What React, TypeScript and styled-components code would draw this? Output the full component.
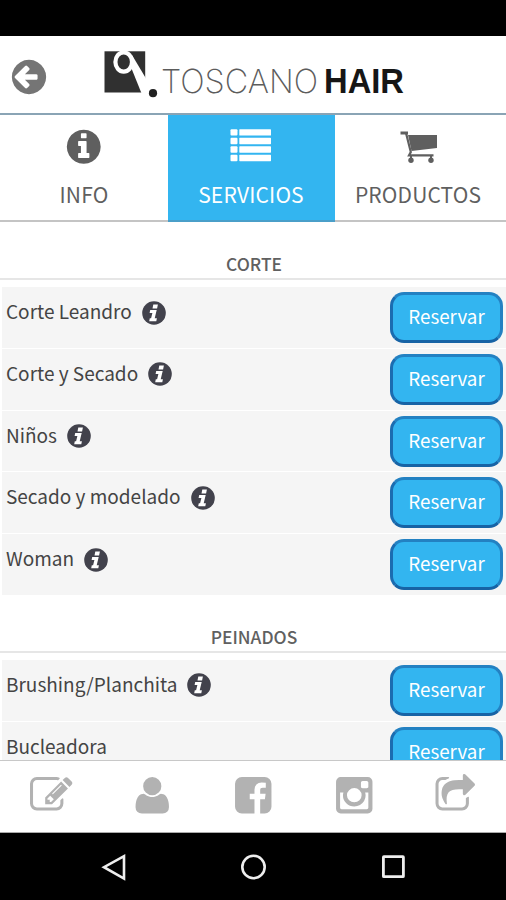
import React from "react";
import styled, { createGlobalStyle } from "styled-components";

const GlobalStyle = createGlobalStyle`
  * { box-sizing: border-box; }
  body { margin: 0; background: #fff; }
  svg { display: block; flex: none; }
`;

const Screen = styled.div`
  width: 506px;
  height: 900px;
  display: flex;
  flex-direction: column;
  overflow: hidden;
  background: #fff;
  font-family: "Noto Sans CJK SC", "Noto Sans", sans-serif;
`;

const StatusBar = styled.div`
  flex: none;
  height: 36px;
  background: #000;
`;

const Header = styled.header`
  flex: none;
  height: 79px;
  display: flex;
  align-items: flex-start;
  border-bottom: 2px solid #8aa4b5;
`;

const BackButton = styled.button`
  border: 0;
  padding: 0;
  margin: 21px 0 0 9px;
  background: none;
  color: #757575;
`;

const Logo = styled.svg`
  margin: 10px 0 0 51px;
`;

const Tabs = styled.nav`
  flex: none;
  height: 107px;
  display: grid;
  grid-template-columns: 168px 167px 171px;
`;

const Tab = styled.button<{ $active?: boolean; $inset?: number }>`
  border: 0;
  border-bottom: 2px solid ${(p) => (p.$active ? "#4a9fc9" : "#c4c4c4")};
  margin: 0;
  padding: 12px ${(p) => p.$inset ?? 0}px 0 0;
  display: flex;
  flex-direction: column;
  align-items: center;
  gap: 15px;
  font: 400 21px/24px "Noto Sans CJK SC", sans-serif;
  letter-spacing: 0.15px;
  color: ${(p) => (p.$active ? "#fff" : "#5f5f5f")};
  background: ${(p) => (p.$active ? "#33b5f0" : "#fff")};
`;

const TabIcon = styled.span`
  height: 40px;
  display: flex;
  align-items: center;
`;

const Content = styled.main`
  flex: 1;
  min-height: 0;
  overflow: hidden;
`;

const SectionTitle = styled.h2`
  margin: 0;
  padding: 30px 0 0 2px;
  height: 58px;
  border-bottom: 2px solid #e6e6e6;
  text-align: center;
  font-size: 17.4px;
  line-height: 24px;
  font-weight: 500;
  color: #606060;
`;

const List = styled.ul`
  list-style: none;
  margin: 7px 0 0 2px;
  padding: 0;
  display: flex;
  flex-direction: column;
  gap: 1px;
`;

const Row = styled.li`
  height: 60.8px;
  padding: 5px 3px 0 4px;
  display: flex;
  align-items: flex-start;
  justify-content: space-between;
  background: #f5f5f5;
`;

const Service = styled.div`
  display: flex;
  align-items: flex-start;
  gap: 10px;
  padding-top: 6px;
  font-size: 19px;
  line-height: 26px;
  color: #444;
`;

const Badge = styled.svg`
  margin-top: 2.5px;
`;

const ReserveButton = styled.button`
  width: 113px;
  height: 51px;
  padding: 0 0 3px;
  border: 3px solid;
  border-color: #2381c2 #2381c2 #1763a5 #1b6cb0;
  border-radius: 14px;
  background: #33b5f0;
  color: #fff;
  font: 400 18.8px/24px "Noto Sans CJK SC", sans-serif;
`;

const Footer = styled.footer`
  flex: none;
  height: 73px;
  padding: 13px 0 0 1px;
  display: flex;
  justify-content: space-around;
  align-items: flex-start;
  border-top: 1px solid #c8c8c8;
  border-bottom: 1px solid #aaa;
  color: #b2b2b2;
  background: #fff;
`;

const FooterItem = styled.a`
  flex: 1;
  display: flex;
  justify-content: center;
`;

const SystemBar = styled.div`
  flex: none;
  height: 67px;
  display: flex;
  justify-content: center;
  align-items: center;
  gap: 113px;
  background: #000;
`;

const DISC =
  "q0 209-103 385.5t-279.5 279.5-385.5 103-385.5-103-279.5-279.5-103-385.5 103-385.5 279.5-279.5 385.5-103 385.5 103 279.5 279.5 103 385.5z";

const paths = {
  back:
    "M1280 960v-128q0-26-19-45t-45-19h-502l189-189q19-19 19-45t-19-45l-91-91q-18-18-45-18t-45 18l-362 362-91 91q-18 18-18 45t18 45l91 91 362 362q18 18 45 18t45-18l91-91q18-18 18-45t-18-45l-189-189h502q26 0 45-19t19-45zm384-64" +
    DISC,
  info:
    "M1152 1376v-160q0-14-9-23t-23-9h-96v-512q0-14-9-23t-23-9h-320q-14 0-23 9t-9 23v160q0 14 9 23t23 9h96v320h-96q-14 0-23 9t-9 23v160q0 14 9 23t23 9h448q14 0 23-9t9-23zm-128-896v-160q0-14-9-23t-23-9h-192q-14 0-23 9t-9 23v160q0 14 9 23t23 9h192q14 0 23-9t9-23zm640 416" +
    DISC,
  edit:
    "M888 1184l116-116-152-152-116 116v56h96v96h56zm440-720q-16-16-33 1l-350 350q-17 17-1 33t33-1l350-350q17-17 1-33zm80 594v190q0 119-84.5 203.5t-203.5 84.5h-832q-119 0-203.5-84.5t-84.5-203.5v-832q0-119 84.5-203.5t203.5-84.5h832q63 0 117 25 15 7 18 23 3 17-9 29l-49 49q-14 14-32 8-23-6-45-6h-832q-66 0-113 47t-47 113v832q0 66 47 113t113 47h832q66 0 113-47t47-113v-126q0-13 9-22l64-64q15-15 35-7t20 29zm-96-738l288 288-672 672h-288v-288zm444 132l-92 92-288-288 92-92q28-28 68-28t68 28l152 152q28 28 28 68t-28 68z",
  user:
    "M1600 1405q0 120-73 189.5t-194 69.5h-874q-121 0-194-69.5t-73-189.5q0-53 3.5-103.5t14-109 26.5-108.5 43-97.5 62-81 85.5-53.5 111.5-20q9 0 42 21.5t74.5 48 108 48 133.5 21.5 133.5-21.5 108-48 74.5-48 42-21.5q61 0 111.5 20t85.5 53.5 62 81 43 97.5 26.5 108.5 14 109 3.5 103.5zm-320-893q0 159-112.5 271.5t-271.5 112.5-271.5-112.5-112.5-271.5 112.5-271.5 271.5-112.5 271.5 112.5 112.5 271.5z",
  facebook:
    "M1376 128q119 0 203.5 84.5t84.5 203.5v960q0 119-84.5 203.5t-203.5 84.5h-188v-595h199l30-232h-229v-148q0-56 23.5-84t91.5-28l122-1v-207q-63-9-178-9-136 0-217.5 80t-81.5 226v171h-200v232h200v595h-532q-119 0-203.5-84.5t-84.5-203.5v-960q0-119 84.5-203.5t203.5-84.5h960z",
  instagram:
    "M1490 1426v-648h-135q20 63 20 131 0 126-64 232.5t-174 168.5-240 62q-197 0-337-135.5t-140-327.5q0-68 20-131h-141v648q0 26 17.5 43.5t43.5 17.5h1069q25 0 43-17.5t18-43.5zm-284-533q0-124-90.5-211.5t-218.5-87.5q-127 0-217.5 87.5t-90.5 211.5 90.5 211.5 217.5 87.5q128 0 218.5-87.5t90.5-211.5zm284-360v-165q0-28-20-48.5t-49-20.5h-174q-29 0-49 20.5t-20 48.5v165q0 29 20 49t49 20h174q29 0 49-20t20-49zm174-208v1142q0 81-58 139t-139 58h-1142q-81 0-139-58t-58-139v-1142q0-81 58-139t139-58h1142q81 0 139 58t58 139z",
  share:
    "M1472 989v259q0 119-84.5 203.5t-203.5 84.5h-832q-119 0-203.5-84.5t-84.5-203.5v-832q0-119 84.5-203.5t203.5-84.5h255q13 0 22.5 9.5t9.5 22.5q0 27-26 32-77 26-133 60-10 4-16 4h-112q-66 0-113 47t-47 113v832q0 66 47 113t113 47h832q66 0 113-47t47-113v-214q0-19 18-29 28-13 54-37 16-16 35-8 21 9 21 31zm237-496l-384 384q-18 19-45 19-12 0-25-5-39-17-39-59v-192h-160q-323 0-438 131-119 137-74 473 3 23-20 34-8 2-12 2-16 0-26-13-10-14-21-31t-39.5-68.5-49.5-99.5-38.5-114-17.5-122q0-49 3.5-91t14-90 28-88 47-81.5 68.5-74 94.5-61.5 124.5-48.5 159.5-30.5 196.5-11h160v-192q0-42 39-59 13-5 25-5 26 0 45 19l384 384q19 19 19 45t-19 45z",
};

const Icon = ({ name, size }: { name: keyof typeof paths; size: number }) => (
  <svg width={size} height={size} viewBox="0 0 1792 1792" fill="currentColor">
    <path d={paths[name]} />
  </svg>
);

const ListIcon = () => (
  <svg width="42" height="40" viewBox="0 0 42 40" fill="currentColor">
    {[2.2, 10.8, 19.3, 27.8].map((y) => (
      <g key={y}>
        <rect x="0.5" y={y} width="7" height="6.4" rx="1" />
        <rect x="9.3" y={y} width="31.7" height="6.4" rx="0.6" />
      </g>
    ))}
  </svg>
);

const CartIcon = () => (
  <svg width="37" height="40" viewBox="0 0 37 40">
    <path d="M8 8h29v13L11.5 24z" fill="#5f5f5f" />
    <path d="M6 6l4.8 19-1.8 3.4h24.5" fill="none" stroke="#5f5f5f" strokeWidth="2.2" />
    <path d="M0.5 6h7.5" stroke="#5f5f5f" strokeWidth="3" />
    <circle cx="11" cy="33.2" r="2.7" fill="#5f5f5f" />
    <circle cx="31" cy="33.2" r="2.7" fill="#5f5f5f" />
    <path d="M11 28v4M31 28v4" stroke="#5f5f5f" strokeWidth="2" />
  </svg>
);

const InfoBadge = () => (
  <Badge width="24" height="24" viewBox="0 0 24 24">
    <circle cx="12" cy="12" r="11.8" fill="#42424c" />
    <path d="M11.3 3.6h4.6l-.8 3.8h-4.6zM8.2 9.1h6.5l-2 8.2h2.2l-.6 2.9H7.2l.6-2.9h1.3l1.3-5.4H7.6z" fill="#fff" />
  </Badge>
);

const Brand = () => (
  <Logo width="330" height="60" viewBox="100 46 330 60">
    <rect x="104.5" y="51.3" width="40.7" height="41.2" fill="#303030" />
    <path d="M132 55L146 78.5V93.5H141.6L130.5 66z" fill="#fff" />
    <ellipse cx="123.7" cy="62" rx="8.3" ry="9.6" fill="#303030" stroke="#fff" strokeWidth="4.2" />
    <circle cx="153" cy="93.2" r="4.1" fill="#202020" />
    <text x="161" y="93" fill="#5c5c5c" fontFamily="Inter, sans-serif" fontWeight="200" fontSize="33" textLength="157" lengthAdjust="spacingAndGlyphs">
      TOSCANO
    </text>
    <text x="324" y="93" fill="#161616" fontFamily="Liberation Sans, sans-serif" fontWeight="700" fontSize="35" textLength="80" lengthAdjust="spacingAndGlyphs">
      HAIR
    </text>
  </Logo>
);

type Item = { name: string; info: boolean };

const cuts: Item[] = [
  { name: "Corte Leandro", info: true },
  { name: "Corte y Secado", info: true },
  { name: "Niños", info: true },
  { name: "Secado y modelado", info: true },
  { name: "Woman", info: true },
];

const styles: Item[] = [
  { name: "Brushing/Planchita", info: true },
  { name: "Bucleadora", info: false },
];

const ServiceList = ({ items }: { items: Item[] }) => (
  <List>
    {items.map((item) => (
      <Row key={item.name}>
        <Service>
          {item.name}
          {item.info && <InfoBadge />}
        </Service>
        <ReserveButton>Reservar</ReserveButton>
      </Row>
    ))}
  </List>
);

const footerIcons = ["edit", "user", "facebook", "instagram", "share"] as const;

export default function App() {
  return (
    <Screen>
      <GlobalStyle />
      <StatusBar />
      <Header>
        <BackButton aria-label="Volver">
          <Icon name="back" size={40} />
        </BackButton>
        <Brand />
      </Header>
      <Tabs>
        <Tab>
          <TabIcon><Icon name="info" size={39.5} /></TabIcon>
          INFO
        </Tab>
        <Tab $active $inset={1}>
          <TabIcon><ListIcon /></TabIcon>
          SERVICIOS
        </Tab>
        <Tab $inset={5}>
          <TabIcon><CartIcon /></TabIcon>
          PRODUCTOS
        </Tab>
      </Tabs>
      <Content>
        <SectionTitle>CORTE</SectionTitle>
        <ServiceList items={cuts} />
        <SectionTitle>PEINADOS</SectionTitle>
        <ServiceList items={styles} />
      </Content>
      <Footer>
        {footerIcons.map((name) => (
          <FooterItem key={name}>
            <Icon name={name} size={42.5} />
          </FooterItem>
        ))}
      </Footer>
      <SystemBar>
        <svg width="26" height="28" viewBox="0 0 26 28" fill="none" stroke="#eee" strokeWidth="2.6">
          <path d="M23 3.2v22.4L3 14.2z" />
        </svg>
        <svg width="26" height="28" viewBox="0 0 26 28" fill="none" stroke="#eee" strokeWidth="2.6">
          <circle cx="13.5" cy="14" r="11.2" />
        </svg>
        <svg width="26" height="28" viewBox="0 0 26 28" fill="none" stroke="#eee" strokeWidth="2.8">
          <rect x="4.4" y="3.7" width="20" height="20" rx="0.5" />
        </svg>
      </SystemBar>
    </Screen>
  );
}
